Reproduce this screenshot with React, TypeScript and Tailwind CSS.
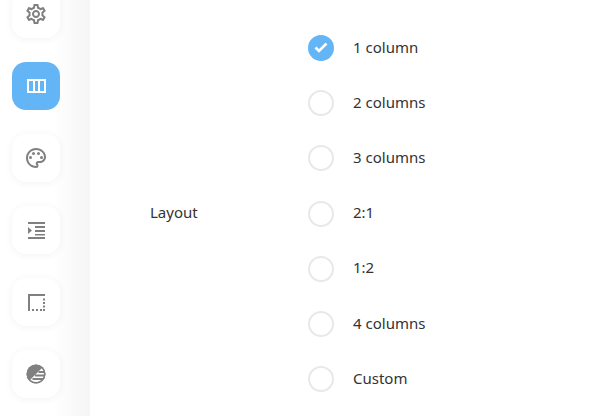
import { MdOutlineSettings, MdOutlinePalette } from "react-icons/md";

const options = ["1 column", "2 columns", "3 columns", "2:1", "1:2", "4 columns", "Custom"];

function Columns() {
  return (
    <svg width="19" height="14" viewBox="0 0 19 14" fill="none" stroke="#fff" strokeWidth="2">
      <rect x="1" y="1" width="17" height="12" />
      <path d="M7 1v12M12 1v12" />
    </svg>
  );
}

function Indent() {
  return (
    <svg width="18" height="18" viewBox="0 0 18 18" fill="#808080">
      <path d="M1 1h17v2H1zM8 5h10v2H8zM8 9h10v2H8zM8 13h10v1.500H8zM1 16h17v2H1zM1 6l4 3.500L1 13z" />
    </svg>
  );
}

function BorderIcon() {
  return (
    <svg width="18" height="18" viewBox="0 0 18 18" fill="#808080">
      <path d="M1 1h17v2H3v15H1z" />
      <path d="M5 16h2v2H5zM9 16h2v2H9zM13 16h2v2h-2zM16 16h2v2h-2zM16 12.500h2v2h-2zM16 9h2v2h-2zM16 5.500h2v2h-2z" />
    </svg>
  );
}

function Shade() {
  return (
    <svg width="20" height="20" viewBox="0 0 20 20">
      <circle cx="10" cy="10" r="9.500" fill="#808080" />
      <path d="M3.500 16.500 16.500 3.500 L19 9 L17 16 L10 19 Z" fill="#fff" />
      <circle cx="10" cy="10" r="8.750" fill="none" stroke="#808080" strokeWidth="1.500" />
      <path d="M12.500 8h6M9 11.500h9.500M6.500 15h10.500" stroke="#808080" strokeWidth="1.800" />
    </svg>
  );
}

function Tile({ active, children }: { active?: boolean; children: React.ReactNode }) {
  return (
    <div
      className={`flex h-12 w-12 items-center justify-center rounded-[14px] ${
        active ? "bg-[#64b5f6]" : "bg-white shadow-[0_1px_8px_rgba(0,0,0,0.05)]"
      }`}
    >
      {children}
    </div>
  );
}

export default function App() {
  return (
    <div className="flex h-[416px] w-[591px] overflow-hidden bg-white font-['Noto_Sans',sans-serif] text-[15px] text-[#333333]">
      <aside className="-mt-2.5 flex h-[426px] w-[90px] shrink-0 flex-col gap-6 bg-gradient-to-r from-white from-60% to-[#f5f5f5] pl-3">
        <Tile><MdOutlineSettings size={24} color="#808080" /></Tile>
        <Tile active><Columns /></Tile>
        <Tile><MdOutlinePalette size={24} color="#808080" /></Tile>
        <Tile><Indent /></Tile>
        <Tile><BorderIcon /></Tile>
        <Tile><Shade /></Tile>
      </aside>
      <main className="flex flex-1 items-center pl-[60px] pt-[11px]">
        <div className="w-[158px] pb-0.5">Layout</div>
        <div className="flex flex-col gap-[29.200px]">
          {options.map((o, i) => (
            <label key={o} className="flex h-[26px] items-center gap-[19px]">
              {i === 0 ? (
                <span className="flex h-[26px] w-[26px] items-center justify-center rounded-full bg-[#64b5f6]">
                  <svg width="14" height="11" viewBox="0 0 14 11" fill="none" stroke="#fff" strokeWidth="2.600">
                    <path d="M1.500 5.500 5 9l7.500-7.500" />
                  </svg>
                </span>
              ) : (
                <span className="h-[26px] w-[26px] rounded-full border-2 border-[#e8e8e8] bg-white" />
              )}
              <span className="pb-0.5">{o}</span>
            </label>
          ))}
        </div>
      </main>
    </div>
  );
}
